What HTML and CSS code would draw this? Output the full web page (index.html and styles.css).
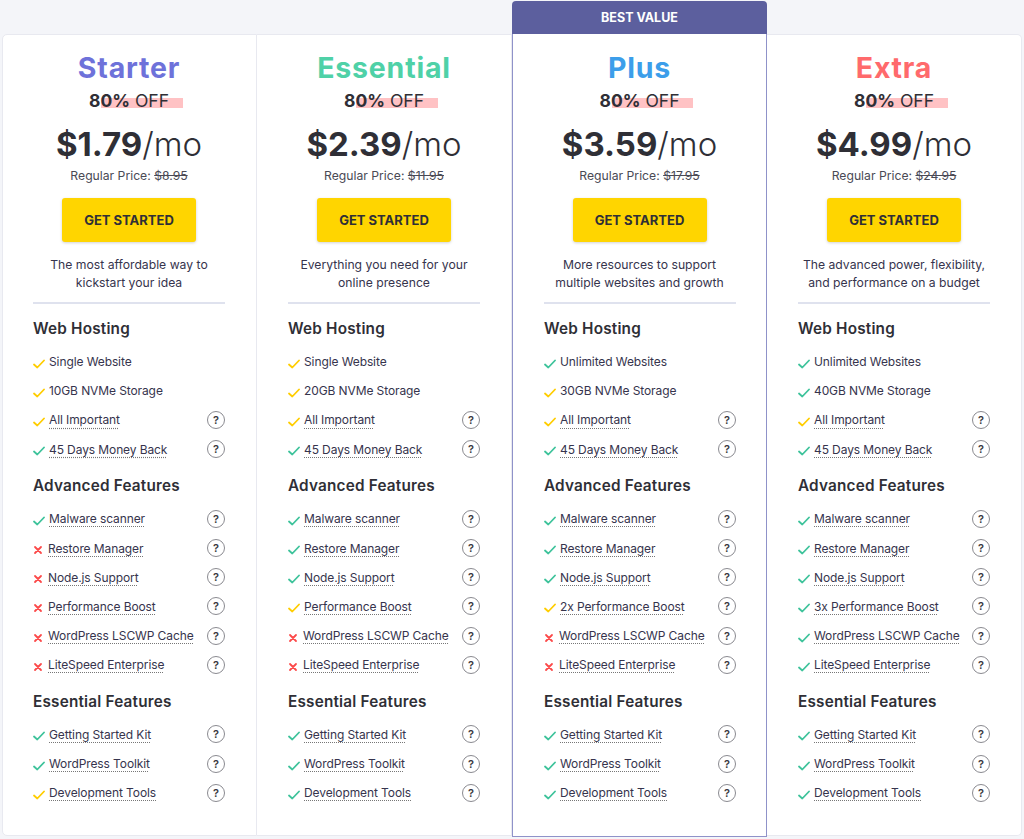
FILE: index.html
```html
<!DOCTYPE html>
<html>
<head>
<meta charset="utf-8">
<link rel="stylesheet" href="styles.css">
</head>
<body>
<svg width="0" height="0" class="defs">
  <defs>
    <symbol id="chk" viewBox="0 0 12 10"><polyline points="1,5.5 4.3,8.5 11,1.5" fill="none" stroke="currentColor" stroke-width="1.8" stroke-linecap="round" stroke-linejoin="round"/></symbol>
    <symbol id="xx" viewBox="0 0 10 10"><path d="M2 2L8 8M8 2L2 8" fill="none" stroke="currentColor" stroke-width="1.8" stroke-linecap="round"/></symbol>
  </defs>
</svg>
<div class="plans">

  <div class="col">
    <div class="card first">
      <div class="title starter">Starter</div>
      <div class="off"><span class="hl"></span><b>80%</b> OFF</div>
      <div class="price"><b>$1.79</b>/mo</div>
      <div class="regular">Regular Price: <s>$8.95</s></div>
      <a class="btn">GET STARTED</a>
      <p class="desc">The most affordable way to<br>kickstart your idea</p>
      <hr class="div">
      <h3>Web Hosting</h3>
      <ul>
        <li><svg class="ic y"><use href="#chk"/></svg><span>Single Website</span></li>
        <li><svg class="ic y"><use href="#chk"/></svg><span>10GB NVMe Storage</span></li>
        <li><svg class="ic y"><use href="#chk"/></svg><span class="u">All Important</span><i class="q">?</i></li>
        <li><svg class="ic g"><use href="#chk"/></svg><span class="u">45 Days Money Back</span><i class="q">?</i></li>
      </ul>
      <h3>Advanced Features</h3>
      <ul>
        <li><svg class="ic g"><use href="#chk"/></svg><span class="u">Malware scanner</span><i class="q">?</i></li>
        <li><svg class="ic r"><use href="#xx"/></svg><span class="u">Restore Manager</span><i class="q">?</i></li>
        <li><svg class="ic r"><use href="#xx"/></svg><span class="u">Node.js Support</span><i class="q">?</i></li>
        <li><svg class="ic r"><use href="#xx"/></svg><span class="u">Performance Boost</span><i class="q">?</i></li>
        <li><svg class="ic r"><use href="#xx"/></svg><span class="u">WordPress LSCWP Cache</span><i class="q">?</i></li>
        <li><svg class="ic r"><use href="#xx"/></svg><span class="u">LiteSpeed Enterprise</span><i class="q">?</i></li>
      </ul>
      <h3>Essential Features</h3>
      <ul>
        <li><svg class="ic g"><use href="#chk"/></svg><span class="u">Getting Started Kit</span><i class="q">?</i></li>
        <li><svg class="ic g"><use href="#chk"/></svg><span class="u">WordPress Toolkit</span><i class="q">?</i></li>
        <li><svg class="ic y"><use href="#chk"/></svg><span class="u">Development Tools</span><i class="q">?</i></li>
      </ul>
    </div>
  </div>

  <div class="col">
    <div class="card">
      <div class="title essential">Essential</div>
      <div class="off"><span class="hl"></span><b>80%</b> OFF</div>
      <div class="price"><b>$2.39</b>/mo</div>
      <div class="regular">Regular Price: <s>$11.95</s></div>
      <a class="btn">GET STARTED</a>
      <p class="desc">Everything you need for your<br>online presence</p>
      <hr class="div">
      <h3>Web Hosting</h3>
      <ul>
        <li><svg class="ic y"><use href="#chk"/></svg><span>Single Website</span></li>
        <li><svg class="ic y"><use href="#chk"/></svg><span>20GB NVMe Storage</span></li>
        <li><svg class="ic y"><use href="#chk"/></svg><span class="u">All Important</span><i class="q">?</i></li>
        <li><svg class="ic g"><use href="#chk"/></svg><span class="u">45 Days Money Back</span><i class="q">?</i></li>
      </ul>
      <h3>Advanced Features</h3>
      <ul>
        <li><svg class="ic g"><use href="#chk"/></svg><span class="u">Malware scanner</span><i class="q">?</i></li>
        <li><svg class="ic g"><use href="#chk"/></svg><span class="u">Restore Manager</span><i class="q">?</i></li>
        <li><svg class="ic g"><use href="#chk"/></svg><span class="u">Node.js Support</span><i class="q">?</i></li>
        <li><svg class="ic y"><use href="#chk"/></svg><span class="u">Performance Boost</span><i class="q">?</i></li>
        <li><svg class="ic r"><use href="#xx"/></svg><span class="u">WordPress LSCWP Cache</span><i class="q">?</i></li>
        <li><svg class="ic r"><use href="#xx"/></svg><span class="u">LiteSpeed Enterprise</span><i class="q">?</i></li>
      </ul>
      <h3>Essential Features</h3>
      <ul>
        <li><svg class="ic g"><use href="#chk"/></svg><span class="u">Getting Started Kit</span><i class="q">?</i></li>
        <li><svg class="ic g"><use href="#chk"/></svg><span class="u">WordPress Toolkit</span><i class="q">?</i></li>
        <li><svg class="ic g"><use href="#chk"/></svg><span class="u">Development Tools</span><i class="q">?</i></li>
      </ul>
    </div>
  </div>

  <div class="col featured">
    <div class="badge">BEST VALUE</div>
    <div class="card">
      <div class="title plus">Plus</div>
      <div class="off"><span class="hl"></span><b>80%</b> OFF</div>
      <div class="price"><b>$3.59</b>/mo</div>
      <div class="regular">Regular Price: <s>$17.95</s></div>
      <a class="btn">GET STARTED</a>
      <p class="desc">More resources to support<br>multiple websites and growth</p>
      <hr class="div">
      <h3>Web Hosting</h3>
      <ul>
        <li><svg class="ic g"><use href="#chk"/></svg><span>Unlimited Websites</span></li>
        <li><svg class="ic y"><use href="#chk"/></svg><span>30GB NVMe Storage</span></li>
        <li><svg class="ic y"><use href="#chk"/></svg><span class="u">All Important</span><i class="q">?</i></li>
        <li><svg class="ic g"><use href="#chk"/></svg><span class="u">45 Days Money Back</span><i class="q">?</i></li>
      </ul>
      <h3>Advanced Features</h3>
      <ul>
        <li><svg class="ic g"><use href="#chk"/></svg><span class="u">Malware scanner</span><i class="q">?</i></li>
        <li><svg class="ic g"><use href="#chk"/></svg><span class="u">Restore Manager</span><i class="q">?</i></li>
        <li><svg class="ic g"><use href="#chk"/></svg><span class="u">Node.js Support</span><i class="q">?</i></li>
        <li><svg class="ic y"><use href="#chk"/></svg><span class="u">2x Performance Boost</span><i class="q">?</i></li>
        <li><svg class="ic r"><use href="#xx"/></svg><span class="u">WordPress LSCWP Cache</span><i class="q">?</i></li>
        <li><svg class="ic r"><use href="#xx"/></svg><span class="u">LiteSpeed Enterprise</span><i class="q">?</i></li>
      </ul>
      <h3>Essential Features</h3>
      <ul>
        <li><svg class="ic g"><use href="#chk"/></svg><span class="u">Getting Started Kit</span><i class="q">?</i></li>
        <li><svg class="ic g"><use href="#chk"/></svg><span class="u">WordPress Toolkit</span><i class="q">?</i></li>
        <li><svg class="ic g"><use href="#chk"/></svg><span class="u">Development Tools</span><i class="q">?</i></li>
      </ul>
    </div>
  </div>

  <div class="col">
    <div class="card last">
      <div class="title extra">Extra</div>
      <div class="off"><span class="hl"></span><b>80%</b> OFF</div>
      <div class="price"><b>$4.99</b>/mo</div>
      <div class="regular">Regular Price: <s>$24.95</s></div>
      <a class="btn">GET STARTED</a>
      <p class="desc">The advanced power, flexibility,<br>and performance on a budget</p>
      <hr class="div">
      <h3>Web Hosting</h3>
      <ul>
        <li><svg class="ic g"><use href="#chk"/></svg><span>Unlimited Websites</span></li>
        <li><svg class="ic g"><use href="#chk"/></svg><span>40GB NVMe Storage</span></li>
        <li><svg class="ic y"><use href="#chk"/></svg><span class="u">All Important</span><i class="q">?</i></li>
        <li><svg class="ic g"><use href="#chk"/></svg><span class="u">45 Days Money Back</span><i class="q">?</i></li>
      </ul>
      <h3>Advanced Features</h3>
      <ul>
        <li><svg class="ic g"><use href="#chk"/></svg><span class="u">Malware scanner</span><i class="q">?</i></li>
        <li><svg class="ic g"><use href="#chk"/></svg><span class="u">Restore Manager</span><i class="q">?</i></li>
        <li><svg class="ic g"><use href="#chk"/></svg><span class="u">Node.js Support</span><i class="q">?</i></li>
        <li><svg class="ic g"><use href="#chk"/></svg><span class="u">3x Performance Boost</span><i class="q">?</i></li>
        <li><svg class="ic g"><use href="#chk"/></svg><span class="u">WordPress LSCWP Cache</span><i class="q">?</i></li>
        <li><svg class="ic g"><use href="#chk"/></svg><span class="u">LiteSpeed Enterprise</span><i class="q">?</i></li>
      </ul>
      <h3>Essential Features</h3>
      <ul>
        <li><svg class="ic g"><use href="#chk"/></svg><span class="u">Getting Started Kit</span><i class="q">?</i></li>
        <li><svg class="ic g"><use href="#chk"/></svg><span class="u">WordPress Toolkit</span><i class="q">?</i></li>
        <li><svg class="ic g"><use href="#chk"/></svg><span class="u">Development Tools</span><i class="q">?</i></li>
      </ul>
    </div>
  </div>

</div>
</body>
</html>
```
FILE: styles.css
```css
* { box-sizing: border-box; }
html, body { margin: 0; padding: 0; }
body {
  background: #f4f5f9;
  font-family: "Inter", "Noto Sans", "DejaVu Sans", sans-serif;
  color: #36344d;
  width: 1024px;
  height: 839px;
  overflow: hidden;
}
.defs { position: absolute; }
.plans {
  display: grid;
  grid-template-columns: repeat(4, 255px);
  padding: 1px 2px 0 2px;
  align-items: start;
}
.col { display: flex; flex-direction: column; padding-top: 33px; }
.col.featured { padding-top: 0; }
.card {
  background: #fff;
  border: 1px solid #e8e9f0;
  border-left: none;
  height: 802px;
  padding: 16px 31px 0 31px;
  display: flex;
  flex-direction: column;
}
.card.first { border-left: 1px solid #e8e9f0; border-radius: 5px 0 0 5px; padding-left: 30px; }
.card.last { border-radius: 0 5px 5px 0; }
.featured .card {
  border: 1px solid #8f92c9;
  border-top: none;
  height: 803px;
  padding-top: 17px;
}
.badge {
  height: 33px;
  background: #5c5f9e;
  color: #fff;
  font-weight: 700;
  font-size: 12.5px;
  display: flex;
  align-items: center;
  justify-content: center;
  border-radius: 4px 4px 0 0;
}
.title {
  text-align: center;
  font-size: 28.5px;
  font-weight: 700;
  line-height: 34px;
  letter-spacing: 0.8px;
}
.starter { color: #6e72da; }
.essential { color: #4fd1a7; }
.plus { color: #3c9eea; }
.extra { color: #ff6a6c; }
.off {
  margin: 5px auto 0;
  position: relative;
  font-size: 17.5px;
  line-height: 22px;
  color: #2f2f36;
  z-index: 0;
}
.off b { font-weight: 700; }
.hl {
  position: absolute;
  left: 12px;
  right: -14px;
  top: 8px;
  bottom: 4px;
  background: #ffc2c4;
  z-index: -1;
}
.price {
  margin-top: 12px;
  text-align: center;
  font-size: 33px;
  line-height: 40px;
  font-weight: 300;
  color: #2f2f36;
}
.price b { font-weight: 700; }
.regular {
  margin-top: 3px;
  text-align: center;
  font-size: 12.2px;
  line-height: 18px;
  color: #4a4a55;
}
.btn {
  align-self: center;
  margin-top: 13px;
  width: 134px;
  height: 44px;
  background: #ffd500;
  border-radius: 3px;
  box-shadow: 0 1px 3px rgba(0,0,0,0.18);
  display: flex;
  align-items: center;
  justify-content: center;
  font-size: 13px;
  font-weight: 700;
  color: #2f2f36;
}
.desc {
  margin: 14px 0 0;
  text-align: center;
  font-size: 12.2px;
  line-height: 18px;
  color: #36344d;
}
.div {
  margin: 10px 0 0;
  border: none;
  height: 2px;
  background: #dfe2ee;
  width: 192px;
}
h3 {
  margin: 14px 0 7px;
  font-size: 15.3px;
  line-height: 22px;
  font-weight: 600;
  letter-spacing: 0.2px;
  color: #2f2f36;
}
ul + h3 { margin-top: 11.5px; }
ul { list-style: none; margin: 0; padding: 0; }
li {
  height: 29.2px;
  display: flex;
  align-items: center;
  font-size: 12px;
  letter-spacing: -0.1px;
  color: #36344d;
  width: 192px;
}
.ic { width: 12px; height: 10px; margin: 4px 4px 0 0; flex: none; }
.ic.g { color: #3ec39b; }
.ic.y { color: #ffcd00; }
.ic.r { color: #fc4a4a; width: 10px; height: 10px; margin-right: 5px; }
.u {
  text-decoration: underline dotted #777;
  text-underline-offset: 3px;
}
.q {
  margin-left: auto;
  width: 18px;
  height: 18px;
  border: 1px solid #8a8a90;
  border-radius: 50%;
  font-style: normal;
  font-size: 11px;
  font-weight: 600;
  color: #3a3a40;
  display: flex;
  align-items: center;
  justify-content: center;
  flex: none;
}
```
